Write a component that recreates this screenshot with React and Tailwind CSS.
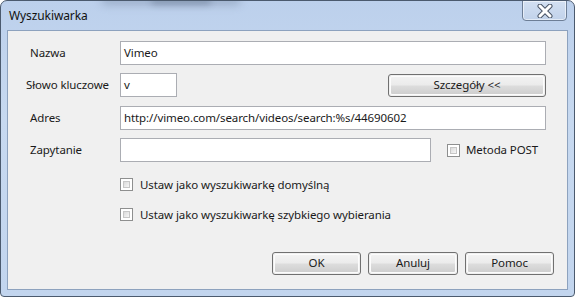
import React from 'react'

const font = { fontFamily: '"Noto Sans", "Open Sans", sans-serif', letterSpacing: '-0.1px' }

function Field({ value = '', className = '' }) {
  return (
    <div className={`h-[24px] border border-[#abadb3] bg-white flex items-center pl-[3px] text-[11.5px] text-[#1a1a1a] ${className}`}>
      {value}
    </div>
  )
}

function Button({ children, className = '' }) {
  return (
    <div
      className={`h-[23px] rounded-[3px] border border-[#707070] p-px flex ${className}`}
    >
      <div className="flex-1 rounded-[2px] border border-[#fcfcfc] bg-[linear-gradient(#f2f2f2_0%,#ebebeb_48%,#dddddd_52%,#cfcfcf_100%)] flex items-center justify-center text-[11.5px] text-[#1a1a1a] leading-none">
        {children}
      </div>
    </div>
  )
}

function Checkbox() {
  return (
    <div className="w-[13px] h-[13px] border border-[#8e8f8f] bg-white p-[2px] shrink-0">
      <div className="w-full h-full border border-[#c6c6c6] bg-[linear-gradient(135deg,#dadada,#f6f6f6)]" />
    </div>
  )
}

function CloseGlyph() {
  return (
    <svg width="18" height="14" viewBox="0 0 18 14">
      <path d="M4 2 L14 12 M14 2 L4 12" stroke="#4a5566" strokeWidth="5" strokeLinecap="round" />
      <path d="M4 2 L14 12 M14 2 L4 12" stroke="#ffffff" strokeWidth="3" strokeLinecap="round" />
    </svg>
  )
}

export default function App() {
  return (
    <div style={font} className="w-[575px] h-[297px] bg-white">
      <div className="w-full h-full rounded-t-[7px] rounded-b-[4px] border border-[#4b5a6e] bg-[linear-gradient(180deg,#bcd0ec_0%,#c7d9f0_40%,#c2d5ee_100%)] flex flex-col overflow-hidden">
        {/* title bar */}
        <div className="h-[29px] relative flex items-center pl-[8px] shrink-0">
          <div className="absolute left-[100px] top-[-6px] w-[140px] h-[10px] rounded-full bg-[#7e90aa] opacity-50 blur-[4px]" />
          <div className="absolute left-[150px] top-[-4px] w-[60px] h-[8px] rounded-full bg-[#5e6f88] opacity-40 blur-[3px]" />
          <span className="relative text-[12px] text-[#111] pt-[1px]">Wyszukiwarka</span>
          <div className="absolute right-[7px] top-[-1px] w-[45px] h-[21px] rounded-b-[4px] border border-[#6d7e96] bg-[linear-gradient(180deg,#d3e0f2,#c1d2ea)] flex items-center justify-center shadow-[inset_0_0_0_1px_rgba(255,255,255,0.55)]">
            <CloseGlyph />
          </div>
        </div>

        {/* client area */}
        <div className="mx-[6px] h-[260px] border border-[#8da2be] bg-[#f0f0f0] shrink-0 text-[11.5px] text-[#1a1a1a]">
          <div className="pt-[10px] flex flex-col">
            <div className="flex items-center">
              <span className="w-[112px] pl-[22px]">Nazwa</span>
              <Field value="Vimeo" className="w-[426px]" />
            </div>
            <div className="flex items-center mt-[8px]">
              <span className="w-[112px] pl-[18px] whitespace-nowrap">Słowo kluczowe</span>
              <Field value="v" className="w-[57px]" />
              <Button className="w-[158px] ml-[211px]">Szczegóły &lt;&lt;</Button>
            </div>
            <div className="flex items-center mt-[9px]">
              <span className="w-[112px] pl-[22px]">Adres</span>
              <Field value="http://vimeo.com/search/videos/search:%s/44690602" className="w-[426px]" />
            </div>
            <div className="flex items-center mt-[8px]">
              <span className="w-[112px] pl-[22px]">Zapytanie</span>
              <Field className="w-[311px]" />
              <div className="ml-[16px] flex items-center gap-[6px]">
                <Checkbox />
                <span>Metoda POST</span>
              </div>
            </div>
            <div className="flex items-center gap-[7px] ml-[112px] mt-[14px]">
              <Checkbox />
              <span>Ustaw jako wyszukiwarkę domyślną</span>
            </div>
            <div className="flex items-center gap-[7px] ml-[112px] mt-[13px]">
              <Checkbox />
              <span>Ustaw jako wyszukiwarkę szybkiego wybierania</span>
            </div>
            <div className="flex gap-[7px] ml-[264px] mt-[28px]">
              <Button className="w-[89px]">OK</Button>
              <Button className="w-[90px]">Anuluj</Button>
              <Button className="w-[89px]">Pomoc</Button>
            </div>
          </div>
        </div>
      </div>
    </div>
  )
}
